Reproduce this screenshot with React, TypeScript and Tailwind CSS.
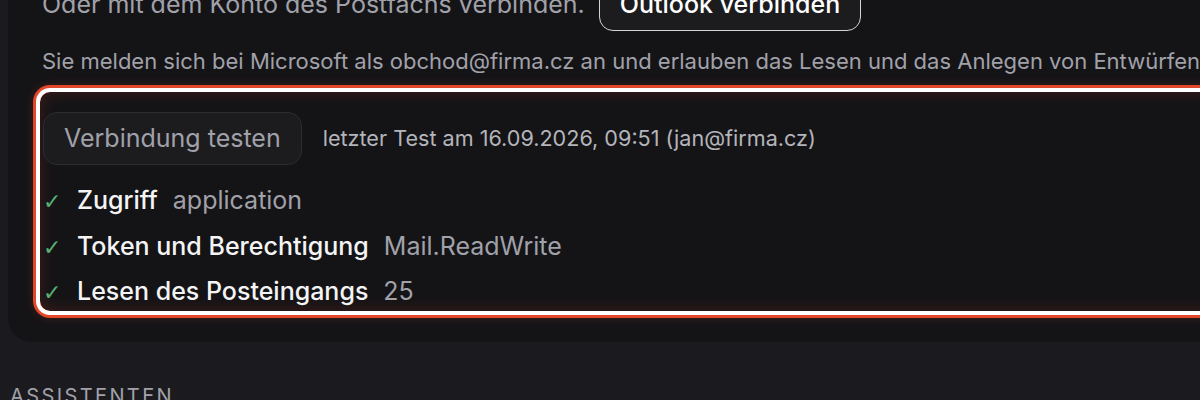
import React from "react";

const checks = [
    { label: "Zugriff", value: "application" },
    { label: "Token und Berechtigung", value: "Mail.ReadWrite" },
    { label: "Lesen des Posteingangs", value: "25" },
];

export default function App() {
    return (
        <div className="h-[400px] w-[1200px] overflow-hidden bg-[#1b1b1f] font-['Inter',_'Noto_Sans',_sans-serif]">
            {/* Card */}
            <div className="-mt-[46px] ml-[8px] w-[1260px] rounded-[24px] bg-[#141417] pl-[32px] pt-[24px] pb-[31px]">
                <div className="flex items-center gap-[14px] pl-[2px]">
                    <span className="whitespace-nowrap text-[25px] text-[#a1a1aa]">
                        Oder mit dem Konto des Postfachs verbinden.
                    </span>
                    <button className="h-[53px] rounded-[14px] border-[1.5px] border-[#d4d4d8] bg-[#1c1c1f] px-[20px] text-[25px] font-medium text-white">
                        Outlook verbinden
                    </button>
                </div>

                <p className="mt-[15px] whitespace-nowrap pl-[2px] text-[22px] leading-[30px] text-[#a1a1aa]">
                    Sie melden sich bei Microsoft als obchod@firma.cz an und erlauben das Lesen und das Anlegen von Entwürfen in Ihrem Postfach.
                </p>

                {/* Highlighted test block */}
                <div className="mt-[16px] rounded-[10px] pl-[3px] pt-[20px] pb-[6px] shadow-[0_0_0_4px_#ffffff,0_0_0_7px_#e2462b,0_0_10px_7px_rgba(228,73,45,0.2),inset_0_0_16px_rgba(190,50,30,0.28)]">
                    <div className="flex items-center gap-[21px]">
                        <button className="h-[53px] rounded-[14px] border border-[#2c2c31] bg-[#1c1c1f] px-[20px] text-[25px] text-[#a1a1aa]">
                            Verbindung testen
                        </button>
                        <span className="whitespace-nowrap text-[21.6px] text-[#b4b4bb]">
                            letzter Test am 16.09.2026, 09:51 (jan@firma.cz)
                        </span>
                    </div>
                    <ul className="mt-[17px] flex flex-col gap-[13.5px]">
                        {checks.map((c) => (
                            <li key={c.label} className="flex h-[32px] items-baseline">
                                <span className="w-[34px] font-['DejaVu_Sans',_sans-serif] text-[22px] text-[#55b274]">✓</span>
                                <span className="text-[25px] font-medium text-[#f4f4f5]">{c.label}</span>
                                <span className="ml-[15px] text-[25px] text-[#a1a1aa]">{c.value}</span>
                            </li>
                        ))}
                    </ul>
                </div>
            </div>

            <h2 className="mt-[40px] ml-[10px] text-[20px] leading-[28px] tracking-[0.12em] text-[#a1a1aa]">
                ASSISTENTEN
            </h2>
        </div>
    );
}
